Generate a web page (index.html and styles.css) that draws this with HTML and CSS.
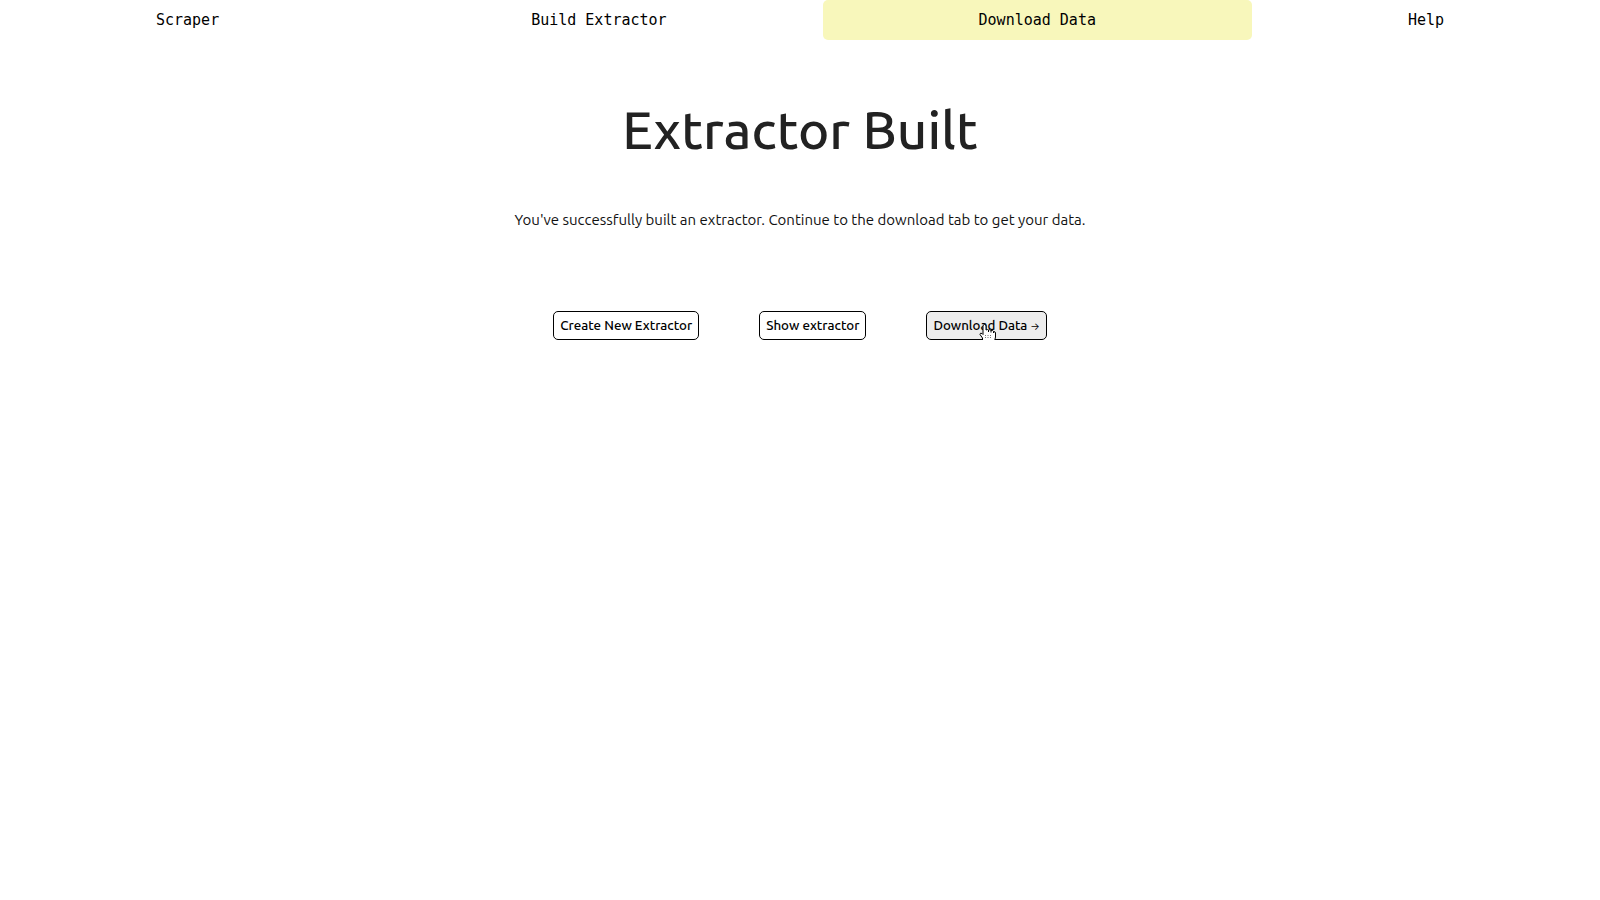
FILE: index.html
```html
<!DOCTYPE html>
<html lang="en">
<head>
<meta charset="utf-8">
<title>Scraper</title>
<link rel="stylesheet" href="styles.css">
</head>
<body>
<nav class="tabs">
  <a class="tab" href="#scraper">Scraper</a>
  <a class="tab" href="#build">Build Extractor</a>
  <a class="tab tab-active" href="#download">Download Data</a>
  <a class="tab" href="#help">Help</a>
</nav>
<main class="content">
  <h1 class="title">Extractor Built</h1>
  <p class="message">You've successfully built an extractor. Continue to the download tab to get your data.</p>
  <div class="actions">
    <button class="button" type="button">Create New Extractor</button>
    <button class="button" type="button">Show extractor</button>
    <button class="button button-hover" type="button">Download Data<span class="arrow"> →</span>
      <svg class="pointer" width="18" height="18" viewBox="0 0 18 18" aria-hidden="true">
        <path d="M4 2Q4 .5 5.500 .5T7 2V6Q8.500 5 9.500 6Q11 5 12 6.500Q13.500 5.500 14.500 7.500Q16.500 7.500 16.500 9V13L15.500 17.500H3.500V14L1 10.500Q1 8.500 3 9.500L4 10.500Z" fill="#fff" stroke="#000"/>
        <path d="M9.500 6V8M12 6.500V8.500M14.500 7.500V9" stroke="#000" fill="none"/>
        <path d="M6.500 11V14.500M9 11V14.500M11.500 11V14.500" stroke="#777" stroke-dasharray="1 1" fill="none"/>
      </svg>
    </button>
  </div>
</main>
</body>
</html>
```
FILE: styles.css
```css
body {
  margin: 0;
  background: #fff;
  color: #222;
  font-family: Ubuntu, "Noto Sans", sans-serif;
  font-size: 15px;
}

.tabs {
  display: flex;
}

.tab {
  flex: 1 1 auto;
  border-radius: 5px;
  color: #000;
  font-family: "DejaVu Sans Mono", monospace;
  line-height: 40px;
  text-align: center;
  text-decoration: none;
}

.tab-active {
  background: #f8f7bb;
}

.content {
  display: flex;
  flex-direction: column;
  align-items: center;
  padding-top: 60px;
}

.title {
  margin: 0;
  font-size: 53px;
  font-weight: 500;
  line-height: 60px;
}

.message {
  margin: 50px 0 0;
  color: #111;
  line-height: 20px;
}

.actions {
  display: flex;
  gap: 60px;
  margin-top: 81px;
}

.button {
  position: relative;
  padding: 5px 6px;
  border: 1px solid #000;
  border-radius: 5px;
  background: #fff;
  color: #000;
  font-family: inherit;
  font-weight: 500;
  line-height: 17px;
}

.button-hover {
  background: #ededed;
}

.arrow {
  font-family: Inter, sans-serif;
  font-size: 10px;
  font-weight: 400;
  line-height: 1;
}

.pointer {
  position: absolute;
  top: 12px;
  left: 52px;
}
```
